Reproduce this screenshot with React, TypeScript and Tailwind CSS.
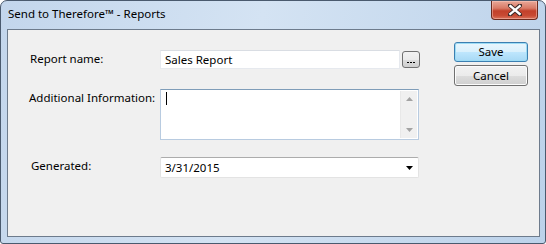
import React from "react";

function CloseButton() {
  return (
    <div className="absolute right-[7px] top-0 w-[47px] h-[19px] rounded-b-[4px] border border-t-0 border-[#6b2a1e] bg-[linear-gradient(#e9a898_0%,#d97a66_40%,#c2412b_55%,#c84a33_80%,#d9735c_100%)] shadow-[inset_0_0_0_1px_rgba(255,210,200,0.45)] flex items-center justify-center">
      <svg width="14" height="12" viewBox="0 0 14 12">
        <path d="M2 1.5 L12 10.5 M12 1.5 L2 10.5" stroke="#3b2a28" strokeWidth="4.2" strokeLinecap="square" />
        <path d="M2.3 2 L11.7 10 M11.7 2 L2.3 10" stroke="#ffffff" strokeWidth="2.3" strokeLinecap="square" />
      </svg>
    </div>
  );
}

function WinButton({ label, focused }: { label: string; focused?: boolean }) {
  return (
    <button
      className={
        focused
          ? "w-[74px] h-[20px] rounded-[3px] border border-[#3c7fb1] shadow-[inset_0_0_0_1px_#9ddcf5] bg-[linear-gradient(#eaf6fd_0%,#d9f0fc_50%,#bee6fd_51%,#a7d9f5_100%)] text-[11.5px] text-black leading-none"
          : "w-[74px] h-[21px] rounded-[3px] border border-[#707070] shadow-[inset_0_0_0_1px_#fcfcfc] bg-[linear-gradient(#f2f2f2_0%,#ebebeb_50%,#dddddd_51%,#cfcfcf_100%)] text-[11.5px] text-black leading-none"
      }
    >
      {label}
    </button>
  );
}

export default function App() {
  return (
    <div className="w-[546px] h-[244px] overflow-hidden bg-white font-['Noto_Sans',sans-serif]">
      <div className="relative w-[546px] h-[244px] rounded-t-[7px] rounded-b-[3px] border border-[#4a5a6e] bg-[linear-gradient(100deg,#c3d6ec_0%,#d4e3f3_45%,#bcd2ea_100%)] flex flex-col">
        <div className="h-[28px] pl-[7px] pt-[5px] text-[11.5px] text-black leading-[16px] whitespace-nowrap">
          Send to Therefore™ - Reports
        </div>
        <CloseButton />
        <div className="ml-[6px] mr-[5px] h-[208px] border border-[#6d7b8c] bg-[#f0f0f0] flex text-[11.5px] text-black">
          <div className="w-[450px] pt-[20px] flex flex-col">
            <div className="flex h-[19px]">
              <span className="w-[152px] pl-[22px] pt-[1px] leading-[16px] whitespace-nowrap">Report name:</span>
              <div className="w-[240px] h-[19px] bg-white border border-[#e6e9ee] border-t-[#d9dde3] pl-[4px] leading-[17px]">
                Sales Report
              </div>
              <div className="ml-[2px] mt-[1px] w-[18px] h-[17px] rounded-[3px] border border-[#707070] bg-[linear-gradient(#f2f2f2_0%,#ebebeb_50%,#dddddd_51%,#cfcfcf_100%)] flex items-end justify-center pb-[4px]">
                <div className="flex gap-[1px]">
                  <span className="w-[2px] h-[1px] bg-black" />
                  <span className="w-[2px] h-[1px] bg-black" />
                  <span className="w-[2px] h-[1px] bg-black" />
                </div>
              </div>
            </div>
            <div className="flex mt-[20px]">
              <span className="w-[152px] pl-[21px] pt-[1px] leading-[16px] whitespace-nowrap">Additional Information:</span>
              <div className="w-[259px] h-[51px] bg-white border border-[#b8cbe0] border-t-[#7f9db9] flex">
                <div className="flex-1 pl-[5px] pt-[2px]">
                  <div className="w-[1px] h-[13px] bg-black" />
                </div>
                <div className="w-[17px] my-[1px] mr-[1px] bg-[#f0f0f0] border-l border-[#e8e8e8] flex flex-col justify-between items-center py-[6px]">
                  <svg width="7" height="4" viewBox="0 0 7 4"><path d="M0 4 L3.5 0 L7 4 Z" fill="#a3a3a3" /></svg>
                  <svg width="7" height="4" viewBox="0 0 7 4"><path d="M0 0 L3.5 4 L7 0 Z" fill="#a3a3a3" /></svg>
                </div>
              </div>
            </div>
            <div className="flex mt-[17px]">
              <span className="w-[152px] pl-[23px] pt-[1px] leading-[16px] whitespace-nowrap">Generated:</span>
              <div className="w-[259px] h-[21px] bg-white border border-[#e3e3e3] border-t-[#acacac] rounded-[2px] flex items-center pl-[4px] pr-[5px]">
                <span className="flex-1 leading-[17px]">3/31/2015</span>
                <svg width="7" height="4" viewBox="0 0 7 4"><path d="M0 0 L3.5 4 L7 0 Z" fill="#000" /></svg>
              </div>
            </div>
          </div>
          <div className="pt-[12px] flex flex-col gap-[3px] -ml-[4px]">
            <WinButton label="Save" focused />
            <WinButton label="Cancel" />
          </div>
        </div>
      </div>
    </div>
  );
}
